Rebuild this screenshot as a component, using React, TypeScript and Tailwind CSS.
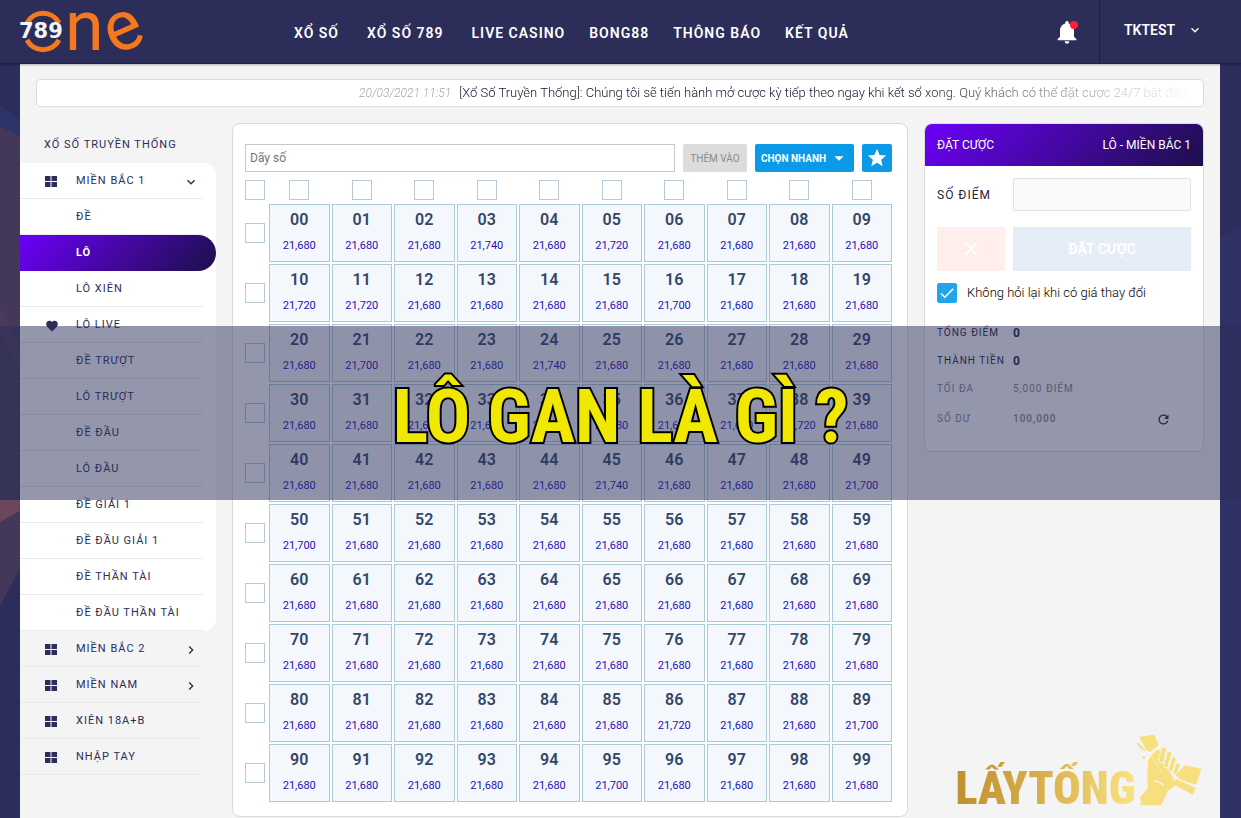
import { useState } from "react";
import clsx from "clsx";
import {
  MdCheck,
  MdClose,
  MdExpandMore,
  MdFavorite,
  MdRefresh,
  MdStar,
  MdArrowDropDown,
  MdChevronRight,
  MdNotifications,
} from "react-icons/md";

const LOTTERY_NAV = ["XỔ SỐ", "XỔ SỐ 789"];
const NAV = ["LIVE CASINO", "BONG88", "THÔNG BÁO", "KẾT QUẢ"];

type MenuItem = {
  label: string;
  icon?: "grid" | "heart";
  arrow?: "down" | "right";
};

const OPEN_GROUP: MenuItem[] = [
  { label: "MIỀN BẮC 1", icon: "grid", arrow: "down" },
  { label: "ĐỀ" },
  { label: "LÔ" },
  { label: "LÔ XIÊN" },
  { label: "LÔ LIVE", icon: "heart" },
  { label: "ĐỀ TRƯỢT" },
  { label: "LÔ TRƯỢT" },
  { label: "ĐỀ ĐẦU" },
  { label: "LÔ ĐẦU" },
  { label: "ĐỀ GIẢI 1" },
  { label: "ĐỀ ĐẦU GIẢI 1" },
  { label: "ĐỀ THẦN TÀI" },
  { label: "ĐỀ ĐẦU THẦN TÀI" },
];

const OTHER_GROUPS: MenuItem[] = [
  { label: "MIỀN BẮC 2", icon: "grid", arrow: "right" },
  { label: "MIỀN NAM", icon: "grid", arrow: "right" },
  { label: "XIÊN 18A+B", icon: "grid" },
  { label: "NHẬP TAY", icon: "grid" },
];

// Everything not listed here pays the base price.
const BASE_PRICE = "21,680";
const PRICES: Record<string, string> = {
  "03": "21,740",
  "05": "21,720",
  "10": "21,720",
  "11": "21,720",
  "16": "21,700",
  "21": "21,700",
  "24": "21,740",
  "38": "21,720",
  "45": "21,740",
  "49": "21,700",
  "50": "21,700",
  "86": "21,720",
  "89": "21,700",
  "95": "21,700",
};

const DIGITS = [0, 1, 2, 3, 4, 5, 6, 7, 8, 9];

function Logo() {
  return (
    <svg width="124" height="44" viewBox="0 0 124 44" className="overflow-visible" aria-label="789 One">
      <g fill="none" stroke="#f5781e" strokeWidth="5">
        <path d="M7 14A18 18 0 0 1 39 14" />
        <path d="M7 31A18 18 0 0 0 39 31" />
      </g>
      <g fill="#f5781e" fontFamily="Roboto, sans-serif" fontSize="70">
        <text x="45" y="41">
          n
        </text>
        <text x="85" y="41" transform="rotate(-24 103 22)">
          e
        </text>
      </g>
      <text x="-1" y="29" fontSize="21" fontWeight="700" fill="#f4f4fb" fontFamily="DejaVu Sans, sans-serif">
        789
      </text>
    </svg>
  );
}

function GridIcon() {
  return (
    <svg width="12" height="11" viewBox="0 0 12 11" fill="currentColor" aria-hidden="true">
      <path d="M0 0h5.5v5H0zM6.500 0H12v5H6.500zM0 6h5.500v5H0zM6.500 6H12v5H6.500z" />
    </svg>
  );
}

function Header() {
  return (
    <header className="relative z-10 flex h-16 shrink-0 border-b border-[#1f2045] bg-[#2c2d58] pl-5 text-white shadow-[0_1px_2px_rgba(0,0,0,0.3)]">
      <a href="#" className="mt-[9px] w-[124px]">
        <Logo />
      </a>
      <nav className="flex flex-1 items-center gap-6 pt-[2px] pl-[150px] text-sm font-semibold tracking-[1px]">
        <div className="flex gap-7 pr-1">
          {LOTTERY_NAV.map((label) => (
            <a key={label} href="#">
              {label}
            </a>
          ))}
        </div>
        {NAV.map((label) => (
          <a key={label} href="#">
            {label}
          </a>
        ))}
      </nav>
      <button type="button" aria-label="Thông báo" className="relative mr-[18px] flex items-center">
        <MdNotifications size={28} />
        <span className="absolute top-[21px] right-[3px] size-2 rounded-full bg-[#ff1f3a]" />
      </button>
      <button
        type="button"
        className="flex w-[142px] items-center gap-3 border-l border-[#1f2045] pb-[3px] pl-6 text-sm font-semibold"
      >
        TKTEST
        <MdExpandMore size={16} />
      </button>
    </header>
  );
}

function LeftStrip() {
  return (
    <div className="w-5 shrink-0">
      <svg width="20" height="754" viewBox="0 64 20 754" aria-hidden="true">
        <path d="M0 105L20 120V136L0 126z" fill="#2c3468" />
        <path d="M0 126L20 136V568L0 606z" fill="#43385a" />
        <path d="M0 306L20 350V372L0 330z" fill="#4b3a59" />
        <path d="M0 500H20V511L0 522z" fill="#6c465a" />
      </svg>
    </div>
  );
}

function RightStrip() {
  return (
    <div className="w-[21px] shrink-0">
      <svg width="21" height="754" viewBox="0 64 21 754" aria-hidden="true">
        <path d="M0 236L21 227V818H0z" fill="#303266" />
      </svg>
    </div>
  );
}

function MenuRow({
  item,
  active,
  onSelect,
}: {
  item: MenuItem;
  active?: boolean;
  onSelect?: () => void;
}) {
  return (
    <li
      className={clsx(
        "h-9",
        active && "rounded-r-full bg-linear-[135deg] from-[#6c00f8] to-[#1c0f4a] text-white",
      )}
    >
      <button
        type="button"
        onClick={onSelect}
        className={clsx(
          "flex h-9 w-[183px] items-center border-b pt-[2px] text-left text-[11px] tracking-[1px]",
          active ? "border-transparent font-bold" : "border-[#e9e9ee]",
        )}
      >
        <span className="flex w-14 shrink-0 pl-[25px]">
          {item.icon === "grid" && <GridIcon />}
          {item.icon === "heart" && <MdFavorite size={14} />}
        </span>
        <span className="flex-1">{item.label}</span>
        {item.arrow === "down" && <MdExpandMore size={16} className="mr-1" />}
        {item.arrow === "right" && <MdChevronRight size={16} className="mr-1" />}
      </button>
    </li>
  );
}

function Sidebar() {
  const [selected, setSelected] = useState("LÔ");

  return (
    <aside className="w-[196px] shrink-0 text-[#2c2d58]">
      <h2 className="h-10 pt-[14px] pl-6 text-[11px] leading-4 tracking-[1px]">XỔ SỐ TRUYỀN THỐNG</h2>
      <ul className="rounded-r-xl bg-white">
        {OPEN_GROUP.map((item) => (
          <MenuRow
            key={item.label}
            item={item}
            active={item.label === selected}
            onSelect={() => setSelected(item.label)}
          />
        ))}
      </ul>
      <ul>
        {OTHER_GROUPS.map((item) => (
          <MenuRow key={item.label} item={item} />
        ))}
      </ul>
    </aside>
  );
}

function Tick({ label }: { label: string }) {
  return (
    <input
      type="checkbox"
      aria-label={label}
      className="size-5 appearance-none border border-[#b5cad6] bg-white checked:bg-[#0a9ae8]"
    />
  );
}

function NumberBoard() {
  return (
    <section className="flex-1 rounded-lg border border-[#d9dbde] bg-white pt-5 pr-[15px] pb-[14px] pl-3">
      <div className="flex h-7 gap-2">
        <input
          type="text"
          placeholder="Dãy số"
          aria-label="Dãy số"
          className="min-w-0 flex-1 border border-[#c4c8cc] px-1 text-xs placeholder:text-[#757575]"
        />
        <button type="button" disabled className="w-16 rounded-xs bg-[#dcdcdc] text-[10px] text-[#8b8b8b]">
          THÊM VÀO
        </button>
        <button
          type="button"
          className="flex w-[99px] items-center justify-between rounded-xs bg-[#0a9ae8] pr-1 pl-[6px] text-[10px] font-bold text-white"
        >
          CHỌN NHANH
          <MdArrowDropDown size={22} />
        </button>
        <button
          type="button"
          aria-label="Yêu thích"
          className="flex w-[30px] items-center justify-center rounded-xs bg-[#0a9ae8] text-white"
        >
          <MdStar size={22} />
        </button>
      </div>

      <div className="mt-2 grid grid-cols-[22px_repeat(10,minmax(0,1fr))] gap-x-[2px]">
        <Tick label="Tất cả" />
        {DIGITS.map((d) => (
          <span key={d} className="flex justify-center">
            <Tick label={`Cột ${d}`} />
          </span>
        ))}
      </div>

      <div className="mt-1 grid grid-cols-[22px_repeat(10,minmax(0,1fr))] items-center gap-[2px]">
        {DIGITS.map((row) => (
          <div key={row} className="contents">
            <Tick label={`Hàng ${row}`} />
            {DIGITS.map((col) => {
              const id = `${row}${col}`;
              return (
                <button
                  key={id}
                  type="button"
                  className="flex h-[58px] flex-col items-center border border-[#accbd9] bg-[#f4f8fd] pt-[5px]"
                >
                  <span className="text-base leading-5 font-semibold text-[#334668]">{id}</span>
                  <span className="mt-2 text-[11px] leading-4 text-[#1f10b8]">{PRICES[id] ?? BASE_PRICE}</span>
                </button>
              );
            })}
          </div>
        ))}
      </div>
    </section>
  );
}

function BetPanel() {
  const [skipAsk, setSkipAsk] = useState(true);

  return (
    <section className="w-[280px] shrink-0 self-start overflow-hidden rounded-lg border border-[#d9dbde] bg-white">
      <div className="flex h-[42px] items-center justify-between bg-linear-[135deg] from-[#6c00f8] to-[#1c0f4a] px-3 text-xs text-white">
        <span>ĐẶT CƯỢC</span>
        <span>LÔ - MIỀN BẮC 1</span>
      </div>

      <div className="p-3 text-[#23243f]">
        <div className="grid grid-cols-[68px_1fr] gap-x-2 gap-y-4">
          <label htmlFor="points" className="self-center text-xs whitespace-nowrap tracking-[1px]">
            SỐ ĐIỂM
          </label>
          <input
            id="points"
            type="text"
            className="h-[33px] w-full min-w-0 rounded-xs border border-[#e2e2e2] bg-[#fafafa] px-2 text-sm"
          />
          <button
            type="button"
            disabled
            aria-label="Xóa"
            className="flex h-11 items-center justify-center bg-[#ffeeec] text-white"
          >
            <MdClose size={22} />
          </button>
          <button type="button" disabled className="h-11 bg-[#e5edf8] text-sm font-bold text-white">
            ĐẶT CƯỢC
          </button>
        </div>

        <label className="mt-3 flex items-center gap-[10px] text-[13px] leading-5 font-light text-black">
          <span className="relative flex size-5 items-center justify-center text-white">
            <input
              type="checkbox"
              checked={skipAsk}
              onChange={(e) => setSkipAsk(e.target.checked)}
              className="absolute inset-0 appearance-none rounded-xs border border-[#22a5e8] bg-white checked:bg-[#22a5e8]"
            />
            <MdCheck size={18} className="relative" />
          </span>
          Không hỏi lại khi có giá thay đổi
        </label>

        <dl className="mt-4 mb-[6px] grid grid-cols-[68px_1fr] gap-x-2 text-[10px] leading-7 whitespace-nowrap tracking-[1px]">
          <dt>TỔNG ĐIỂM</dt>
          <dd className="text-xs leading-7 font-bold">0</dd>
          <dt>THÀNH TIỀN</dt>
          <dd className="text-xs leading-7 font-bold">0</dd>
          <dt className="text-[#85868f]">TỐI ĐA</dt>
          <dd className="text-[#85868f]">5,000 ĐIỂM</dd>
          <dt className="pt-[2px] text-[#85868f]">SỐ DƯ</dt>
          <dd className="flex items-center justify-between pt-[2px] pr-5 font-medium text-[#85868f]">
            100,000
            <button type="button" aria-label="Làm mới" className="text-[#23243f]">
              <MdRefresh size={15} />
            </button>
          </dd>
        </dl>
      </div>
    </section>
  );
}

function Watermark() {
  return (
    <div className="absolute right-[18px] bottom-[12px] flex items-end">
      <span className="-mb-2 bg-linear-to-r from-[#bf8f30] via-[#d9b04c] to-[#fbe483] bg-clip-text font-['Liberation_Sans_Narrow','Roboto_Condensed','Roboto',sans-serif] text-[46px] leading-[52px] font-black text-transparent">
        LẤYTỔNG
      </span>
      <svg width="66" height="72" viewBox="588 70 198 216" fill="#f8df7d" aria-hidden="true">
        <path d="M598 78L643 72L656 104L630 124L618 118z" />
        <path d="M588 96L598 98L618 122L604 116zM608 136L614 136L615 146L609 144z" />
        <path d="M600 284L604 270L599 262L624 232L622 200L624 150L634 134L650 118L664 120L662 150L688 182L700 204L710 222L698 230L684 240L664 284z" />
        <g stroke="#f4f4f4" strokeWidth="3">
          <path d="M664 112Q672 106 680 113L672 152Q664 162 656 150z" />
          <path d="M682 124Q690 118 696 126L684 168Q674 176 670 164z" />
          <path d="M696 140Q704 136 709 144L698 182Q688 188 684 176z" />
          <path d="M708 158Q716 154 721 162L712 188Q704 196 698 188z" />
        </g>
        <path d="M706 194L735 164L784 174L768 222L724 208z" />
        <path d="M706 204L768 232L758 252L704 222z" />
        <path d="M642 211Q660 212 670 224" stroke="#f4f4f4" strokeWidth="5" fill="none" />
        <path d="M634 136Q652 160 668 190" stroke="#f4f4f4" strokeWidth="2" fill="none" />
      </svg>
    </div>
  );
}

function TitleBand() {
  return (
    <div className="pointer-events-none absolute inset-x-0 top-[326px] z-20 flex h-[174px] items-center justify-center bg-[#2a2d58]/50">
      <h1 className="pt-2 font-['Liberation_Sans_Narrow','Roboto_Condensed','Roboto',sans-serif] text-[74px] leading-none font-bold whitespace-nowrap text-[#f0e800] [-webkit-text-stroke:4px_#000] [paint-order:stroke_fill]">
        LÔ GAN LÀ GÌ ?
      </h1>
    </div>
  );
}

export default function App() {
  return (
    <div className="relative flex min-h-screen flex-col bg-[#2c2d5a] font-['Roboto','Liberation_Sans',sans-serif]">
      <Header />
      <div className="flex flex-1">
        <LeftStrip />
        <main className="relative min-w-0 flex-1 bg-[#f4f4f4] pt-[15px] pb-px">
          <div className="mx-4 flex h-7 items-center overflow-hidden rounded-sm border border-[#d9dbde] bg-white pr-2 pl-4">
            <p className="w-full overflow-hidden pl-[306px] text-[13px] font-light whitespace-nowrap text-[#14162e] mask-r-from-75% mask-r-to-100%">
              <time className="mr-2 text-xs text-[#a5a5ab] italic">20/03/2021 11:51</time>
              [Xổ Số Truyền Thống]: Chúng tôi sẽ tiến hành mở cược kỳ tiếp theo ngay khi kết sổ xong. Quý khách có thể
              đặt cược 24/7 bắt đầu
            </p>
          </div>
          <div className="mt-4 flex gap-4 pr-4">
            <Sidebar />
            <NumberBoard />
            <BetPanel />
          </div>
          <Watermark />
        </main>
        <RightStrip />
      </div>
      <TitleBand />
    </div>
  );
}
